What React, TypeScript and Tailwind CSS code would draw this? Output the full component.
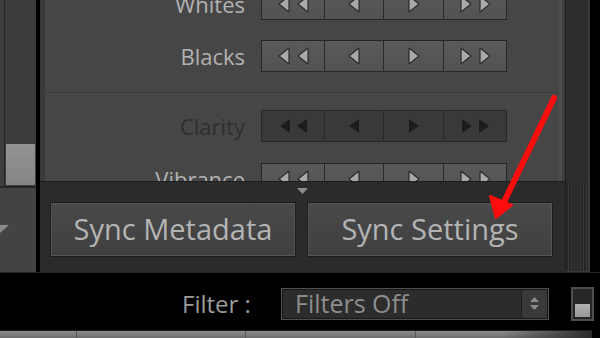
import React from 'react';

type Dir = 'left' | 'right';

const Tri = ({ dir, dim }: { dir: Dir; dim?: boolean }) => {
    if (dim) {
        return (
            <svg width="10" height="14" viewBox="0 0 10 14" className="block">
                <polygon points={dir === 'left' ? '10,0 0,7 10,14' : '0,0 10,7 0,14'} fill="#1c1c1c" />
            </svg>
        );
    }
    return (
        <svg width="12" height="18" viewBox="0 0 12 18" className="block">
            <polygon
                points={dir === 'left' ? '11,1 1,9 11,17' : '1,1 11,9 1,17'}
                fill="#a9a9a9"
                stroke="#2c2c2c"
                strokeWidth="1.2"
                strokeLinejoin="round"
            />
        </svg>
    );
};

const Segment = ({ width, dim, children }: { width: string; dim?: boolean; children: React.ReactNode }) => (
    <div
        className={`${width} h-full flex items-center justify-center gap-[7px] border-r border-[#2a2a2a] last:border-r-0 ${
            dim ? 'bg-[#393939]' : 'bg-gradient-to-b from-[#5a5a5a] to-[#525252]'
        }`}
    >
        {children}
    </div>
);

const SliderRow = ({ label, dim, className = '' }: { label: string; dim?: boolean; className?: string }) => (
    <div className={`flex items-center h-8 shrink-0 ${className}`}>
        <div className={`w-[200px] text-right text-[22px] leading-none ${dim ? 'text-[#2f2f2f]' : 'text-[#b2b2b2]'}`}>
            {label}
        </div>
        <div className="ml-4 flex h-8 w-[246px] border border-[#262626]">
            <Segment width="w-[63px]" dim={dim}>
                <Tri dir="left" dim={dim} />
                <Tri dir="left" dim={dim} />
            </Segment>
            <Segment width="w-[59px]" dim={dim}>
                <Tri dir="left" dim={dim} />
            </Segment>
            <Segment width="w-[60px]" dim={dim}>
                <Tri dir="right" dim={dim} />
            </Segment>
            <Segment width="flex-1" dim={dim}>
                <Tri dir="right" dim={dim} />
                <Tri dir="right" dim={dim} />
            </Segment>
        </div>
    </div>
);

const SyncButton = ({ label }: { label: string }) => (
    <button className="w-[246px] h-[55px] border border-[#1c1c1c] bg-gradient-to-b from-[#494949] to-[#404040] shadow-[inset_0_0_0_1px_#555555] text-[29px] text-[#b4b4b4] leading-none pb-[3px]">
        {label}
    </button>
);

export default function App() {
    return (
        <div className="relative w-[600px] h-[338px] overflow-hidden bg-black font-['Open_Sans','DejaVu_Sans',sans-serif]">
            {/* upper panels */}
            <div className="flex h-[272px]">
                {/* left column */}
                <div className="w-[36px] flex flex-col">
                    <div className="h-[186px] flex">
                        <div className="w-[4px] bg-[#3e3e3e]" />
                        <div className="w-px bg-[#262626]" />
                        <div className="flex-1 bg-[#3c3c3c] flex flex-col justify-end px-px pb-px">
                            <div className="h-[41px] bg-gradient-to-b from-[#939393] to-[#858585] rounded-[1px]" />
                        </div>
                    </div>
                    <div className="h-[2px] bg-[#262626]" />
                    <div className="flex-1 bg-[#434343] pt-[37px]">
                        <svg width="9" height="8" viewBox="0 0 9 8" className="block">
                            <polygon points="-9,0 9,0 0,8" fill="#8a8a8a" />
                        </svg>
                    </div>
                </div>
                <div className="w-[4px]" />

                {/* center column */}
                <div className="w-[525px] flex flex-col">
                    <div className="h-[181px] flex">
                        <div className="w-[5px] bg-[#393939]" />
                        <div className="flex-1 bg-[#464646] flex flex-col overflow-hidden">
                            <SliderRow label="Whites" className="mt-[-12px]" />
                            <SliderRow label="Blacks" className="mt-5" />
                            <div className="mt-5 h-[2px] shrink-0 border-t border-[#3a3a3a] bg-[#4a4a4a]" />
                            <SliderRow label="Clarity" dim className="mt-4" />
                            <SliderRow label="Vibrance" className="mt-[21px]" />
                        </div>
                        <div className="w-[6px] bg-[#3d3d3d] border-l-[3px] border-[#4d4d4d]" />
                    </div>
                    <div className="flex-1 bg-[#2b2b2b] border-t border-[#1e1e1e] flex flex-col items-center">
                        <svg width="11" height="6" viewBox="0 0 11 6" className="block mt-[6px]">
                            <polygon points="0,0 11,0 5.5,6" fill="#8c8c8c" />
                        </svg>
                        <div className="mt-[8px] flex gap-[11px] pr-[2px]">
                            <SyncButton label="Sync Metadata" />
                            <SyncButton label="Sync Settings" />
                        </div>
                    </div>
                </div>

                {/* right column */}
                <div className="w-[25px] flex flex-col border-l border-[#1f1f1f] border-r-2 border-r-[#3a3a3a]">
                    <div className="h-[182px] bg-[#2e2e2e]" />
                    <div className="flex-1 bg-[repeating-linear-gradient(90deg,#262626_0px,#262626_2px,#383838_2px,#383838_3px)] border-b border-[#3a3a3a]" />
                </div>
            </div>

            {/* filter bar */}
            <div className="h-[58px] border-t border-[#232323] flex items-center pt-[4px]">
                <div className="ml-[182px] w-[86px] text-[24px] leading-none text-[#9b9b9b] whitespace-nowrap">
                    Filter :
                </div>
                <div className="ml-[13px] w-[268px] h-[32px] border border-[#505050] bg-[#181818] p-px flex">
                    <div className="flex-1 bg-[#2c2c2c] flex items-center pl-[12px] text-[25px] leading-none text-[#8c8c8c]">
                        Filters Off
                    </div>
                    <div className="w-[26px] bg-[#393939] border-l border-[#1e1e1e] flex flex-col items-center justify-center gap-[3px]">
                        <svg width="9" height="5" viewBox="0 0 9 5" className="block">
                            <polygon points="0,5 9,5 4.5,0" fill="#8a8a8a" />
                        </svg>
                        <svg width="9" height="5" viewBox="0 0 9 5" className="block">
                            <polygon points="0,0 9,0 4.5,5" fill="#8a8a8a" />
                        </svg>
                    </div>
                </div>
                <div className="ml-[22px] w-[23px] h-[34px] border-2 border-[#4e4e4e] bg-[#262626] flex flex-col justify-end p-[2px]">
                    <div className="h-[13px] bg-gradient-to-b from-[#b0b0b0] to-[#989898]" />
                </div>
            </div>

            {/* bottom filmstrip edge */}
            <div className="h-[8px] w-[592px] border-t border-[#202020] flex bg-gradient-to-b from-[#8c8c8c] to-[#6e6e6e]">
                <div className="w-[77px] border-r border-[#5a5a5a]" />
                <div className="w-[169px] border-r border-[#5a5a5a]" />
                <div className="w-[170px] border-r border-[#5a5a5a]" />
                <div className="flex-1 bg-gradient-to-r from-transparent via-transparent to-[#2a2a2a]" />
            </div>

            {/* red annotation arrow */}
            <svg className="absolute inset-0 pointer-events-none" width="600" height="338" viewBox="0 0 600 338">
                <line x1="554" y1="98" x2="503" y2="204" stroke="#ff0d0d" strokeWidth="6" strokeLinecap="round" />
                <polygon points="496,218 490,196 512,205" fill="#ff0d0d" stroke="#ff0d0d" strokeWidth="2" strokeLinejoin="round" />
            </svg>
        </div>
    );
}
